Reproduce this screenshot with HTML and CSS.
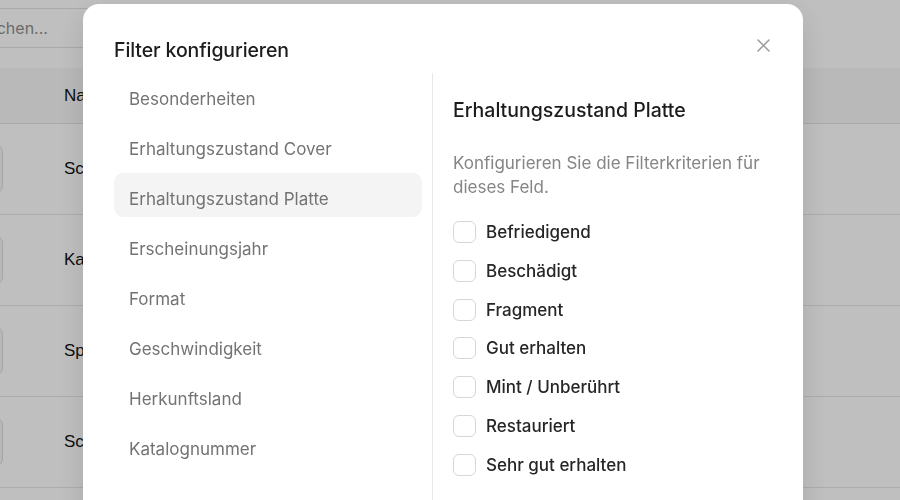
FILE: index.html
```html
<!DOCTYPE html>
<html lang="de">
<head>
<meta charset="utf-8">
<title>Filter konfigurieren</title>
<link rel="stylesheet" href="styles.css">
</head>
<body>
<div class="page">
  <div class="toolbar">
    <div class="search">Suchen...</div>
  </div>
  <div class="table">
    <div class="row head"><div class="cell-thumb"></div><div class="cell-name">Name</div></div>
    <div class="row"><div class="cell-thumb"><div class="thumb"></div></div><div class="cell-name">Schellack</div></div>
    <div class="row"><div class="cell-thumb"><div class="thumb"></div></div><div class="cell-name">Kammermusik</div></div>
    <div class="row"><div class="cell-thumb"><div class="thumb"></div></div><div class="cell-name">Spieluhr</div></div>
    <div class="row"><div class="cell-thumb"><div class="thumb"></div></div><div class="cell-name">Schlager</div></div>
    <div class="row"><div class="cell-thumb"><div class="thumb"></div></div><div class="cell-name">Klassik</div></div>
  </div>
</div>
<div class="overlay"></div>
<div class="modal">
  <div class="modal-head">
    <h2 class="modal-title">Filter konfigurieren</h2>
    <button class="close" aria-label="Schließen">
      <svg width="13" height="13" viewBox="0 0 13 13"><path d="M1 1L12 12M12 1L1 12" stroke="#9a9a9a" stroke-width="1.5" stroke-linecap="round"/></svg>
    </button>
  </div>
  <div class="modal-body">
    <ul class="nav">
      <li class="nav-item">Besonderheiten</li>
      <li class="nav-item">Erhaltungszustand Cover</li>
      <li class="nav-item active">Erhaltungszustand Platte</li>
      <li class="nav-item">Erscheinungsjahr</li>
      <li class="nav-item">Format</li>
      <li class="nav-item">Geschwindigkeit</li>
      <li class="nav-item">Herkunftsland</li>
      <li class="nav-item">Katalognummer</li>
    </ul>
    <div class="panel">
      <h3 class="panel-title">Erhaltungszustand Platte</h3>
      <p class="panel-desc">Konfigurieren Sie die Filterkriterien für dieses Feld.</p>
      <div class="options">
        <label class="option"><span class="box"></span>Befriedigend</label>
        <label class="option"><span class="box"></span>Beschädigt</label>
        <label class="option"><span class="box"></span>Fragment</label>
        <label class="option"><span class="box"></span>Gut erhalten</label>
        <label class="option"><span class="box"></span>Mint / Unberührt</label>
        <label class="option"><span class="box"></span>Restauriert</label>
        <label class="option"><span class="box"></span>Sehr gut erhalten</label>
      </div>
    </div>
  </div>
</div>
</body>
</html>
```
FILE: styles.css
```css
* { box-sizing: border-box; }
html, body { margin: 0; padding: 0; height: 100%; overflow: hidden; }
body {
  background: #ffffff;
  font-family: "Liberation Sans", Arial, sans-serif;
  color: #111;
}
.page {
  margin-left: -61px;
  width: 1100px;
}
.toolbar {
  padding-top: 8px;
  height: 68px;
}
.search {
  width: 300px;
  margin-left: -100px;
  height: 40px;
  border: 1px solid #e2e2e2;
  border-radius: 8px;
  padding: 0 12px 0 137px;
  display: flex;
  align-items: center;
  font-size: 16px;
  color: #8f8f8f;
  font-family: Inter, sans-serif;
}
.table { display: flex; flex-direction: column; }
.row {
  display: flex;
  align-items: center;
  height: 91px;
  border-bottom: 1px solid #e6e6e6;
}
.row.head {
  height: 56px;
  background: #f7f7f7;
  border-bottom: 1px solid #e4e4e4;
}
.cell-thumb {
  width: 125px;
  padding-left: 16px;
}
.thumb {
  width: 48px;
  height: 50px;
  border: 1px solid #dedede;
  border-radius: 8px;
  background: #f6f6f6;
}
.cell-name { font-size: 17px; color: #111; }
.overlay {
  position: fixed;
  inset: 0;
  background: rgba(0, 0, 0, 0.25);
}
.modal {
  position: fixed;
  left: 83px;
  top: 4px;
  width: 720px;
  height: 540px;
  background: #fff;
  border-radius: 16px;
  box-shadow: 0 10px 30px rgba(0,0,0,0.12);
  padding: 30px 31px;
  font-family: Inter, "Noto Sans", sans-serif;
}
.modal-head {
  display: flex;
  justify-content: space-between;
  align-items: flex-start;
  height: 39px;
}
.modal-title {
  margin: 0;
  padding-top: 1px;
  font-size: 19.5px;
  font-weight: 500;
  line-height: 30px;
  color: #1c1c1c;
  letter-spacing: -0.1px;
}
.close {
  border: 0;
  background: none;
  padding: 0;
  margin: 1px -1px 0 0;
  width: 20px;
  height: 20px;
  display: flex;
  align-items: center;
  justify-content: center;
}
.modal-body {
  display: flex;
  height: 500px;
}
.nav {
  list-style: none;
  margin: 0 10px 0 0;
  padding: 0;
  width: 308px;
  display: flex;
  flex-direction: column;
  gap: 6px;
}
.nav-item {
  height: 44px;
  padding: 7px 15px 0;
  display: flex;
  align-items: center;
  font-size: 17px;
  color: #737373;
  border-radius: 9px;
}
.nav-item.active { background: #f4f4f4; }
.panel {
  flex: 1;
  border-left: 1px solid #e8e8e8;
  padding-left: 20px;
  padding-right: 10px;
}
.panel-title {
  margin: 23px 0 0;
  font-size: 19.5px;
  font-weight: 500;
  line-height: 28px;
  color: #1c1c1c;
}
.panel-desc {
  margin: 27px 0 0;
  font-size: 17px;
  line-height: 24px;
  color: #858585;
}
.options {
  margin-top: 22px;
  display: flex;
  flex-direction: column;
  gap: 16.8px;
}
.option {
  display: flex;
  align-items: center;
  gap: 10px;
  font-size: 17px;
  font-weight: 500;
  color: #262626;
  height: 22px;
}
.box {
  width: 23px;
  height: 22px;
  border: 1px solid #d6d6d6;
  border-radius: 6px;
  background: #fff;
}
```
